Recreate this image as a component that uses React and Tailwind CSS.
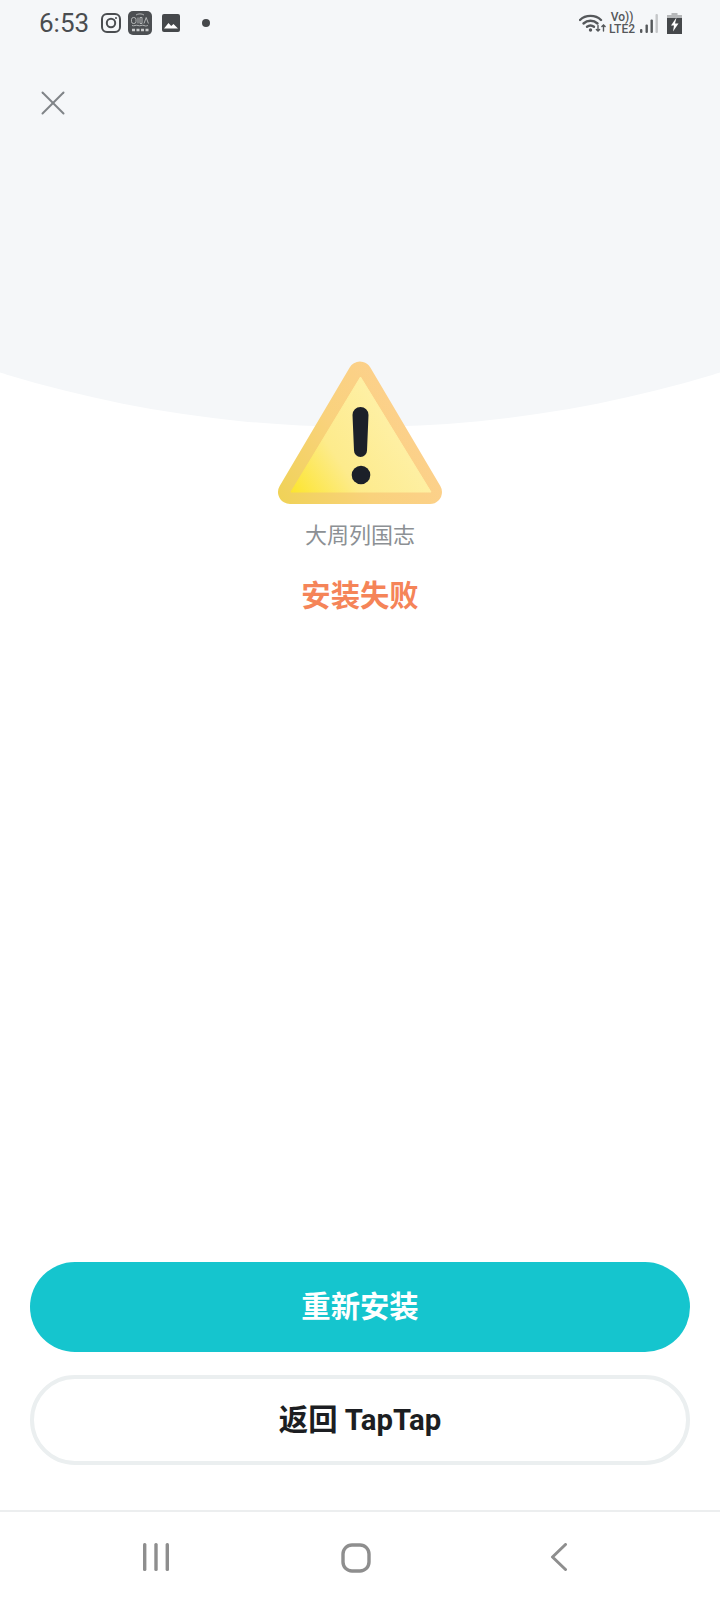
import React from "react";
import { X } from "lucide-react";

const cjk = "font-['Roboto','Noto_Sans_CJK_SC',sans-serif]";

const InstagramIcon = () => (
  <svg width="20" height="20" viewBox="0 0 20 20" fill="none" stroke="#4a4d50" strokeWidth="2">
    <rect x="1" y="1" width="18" height="18" rx="5" />
    <circle cx="10" cy="10" r="4.2" />
    <circle cx="15" cy="5" r="0.6" fill="#4a4d50" strokeWidth="1" />
  </svg>
);

// tiny app badge, mostly a noisy white scribble on dark
const AppBadge = () => (
  <svg width="24" height="24" viewBox="0 0 24 24">
    <rect width="24" height="24" rx="5" fill="#4c4f52" />
    <g stroke="#c9cbcc" strokeWidth="0.8" fill="none">
      <path d="M8 4c2-1.500 6-1.500 8 0" />
      <rect x="3.500" y="6.500" width="4.500" height="6" rx="2" />
      <path d="M10 6.500v6M12 6.500h2v6h-2z" />
      <path d="M16 12.500l2.200-6 2.200 6" />
      <path d="M4 14.500c2 1 4-1 6 0s4-1 6 0 3 0 4 0" />
      <path d="M4 19h3M8.500 19h3M13 19h3M17.500 19h3" strokeWidth="2.400" />
    </g>
  </svg>
);

const GalleryIcon = () => (
  <svg width="18" height="18" viewBox="0 0 18 18">
    <rect width="18" height="18" rx="2" fill="#45484b" />
    <path d="M2 14.500 6.500 9l2.700 3 2.300-2 4.500 4.500z" fill="#fff" />
  </svg>
);

const WifiIcon = () => (
  <svg width="27" height="18" viewBox="0 0 27 18" fill="none" stroke="#55585b" strokeWidth="2.400" strokeLinecap="round">
    <path d="M1 6C6.500 .5 16.500 .5 22 6" />
    <path d="M4.500 9.500c4-3.600 10-3.600 14 0" />
    <path d="M8 12.800c2.200-1.700 4.800-1.700 7 0" />
    <circle cx="11.500" cy="16" r="1.700" fill="#55585b" stroke="none" />
    <path d="M19 11.500v5.500M17.400 15.400l1.600 1.600 1.600-1.600M24.500 17v-6M22.900 12.600l1.600-1.600 1.600 1.600" strokeWidth="1.400" />
  </svg>
);

const SignalIcon = () => (
  <svg width="20" height="19" viewBox="0 0 20 19">
    <rect x="1" y="15" width="2.400" height="4" rx="1" fill="#55585b" />
    <rect x="6.500" y="10.500" width="2.400" height="8.500" rx="1" fill="#55585b" />
    <rect x="11.500" y="5.500" width="2.400" height="13.500" rx="1" fill="#55585b" />
    <rect x="16.500" y="0" width="2.400" height="19" rx="1" fill="#c4c6c8" />
  </svg>
);

const BatteryIcon = () => (
  <svg width="15" height="21" viewBox="0 0 15 21">
    <rect x="4.500" y="0" width="6" height="2" fill="#b6b8ba" />
    <rect x="0" y="2" width="15" height="3" fill="#b6b8ba" />
    <rect x="0" y="5" width="15" height="16" fill="#45484b" />
    <path d="M9.500 4.500 4 12.500h3l-1 6 5.500-8H8z" fill="#fff" />
  </svg>
);

const WarningIcon = () => (
  <svg width="166" height="144" viewBox="0 0 166 144">
    <defs>
      <linearGradient id="warnOuter" gradientUnits="userSpaceOnUse" x1="0" y1="144" x2="150" y2="60">
        <stop offset="0" stopColor="#efd255" />
        <stop offset="0.5" stopColor="#f9d27c" />
        <stop offset="1" stopColor="#fdd08f" />
      </linearGradient>
      <linearGradient id="warnInner" gradientUnits="userSpaceOnUse" x1="14" y1="131" x2="120" y2="60">
        <stop offset="0" stopColor="#fce52e" />
        <stop offset="0.45" stopColor="#fdeb8c" />
        <stop offset="1" stopColor="#fef0a6" />
      </linearGradient>
    </defs>
    <path
      d="M83 12.500 13 131h140z"
      fill="url(#warnOuter)"
      stroke="url(#warnOuter)"
      strokeWidth="24"
      strokeLinejoin="round"
    />
    <path d="M83.500 16 14 131h140z" fill="url(#warnInner)" stroke="url(#warnInner)" strokeWidth="1" strokeLinejoin="round" />
    <path d="M75.500 54a8 8 0 0 1 16 0L90 89.500a6.500 6.500 0 0 1-13 0z" fill="#1c2029" />
    <circle cx="84" cy="114" r="9.300" fill="#1c2029" />
  </svg>
);

const StatusBar = () => (
  <div className="flex h-[46px] items-center justify-between pl-[39px] pr-[38px]">
    <div className="flex items-center">
      <span className="font-['Roboto',sans-serif] text-[26px] leading-none text-[#4a4d50]">6:53</span>
      <div className="ml-3 flex items-center gap-[7px]">
        <InstagramIcon />
        <AppBadge />
        <span className="ml-[3px]"><GalleryIcon /></span>
      </div>
      <span className="ml-[22px] h-2 w-2 rounded-full bg-[#45484b]" />
    </div>
    <div className="flex items-center">
      <WifiIcon />
      <div className="ml-[3px] flex flex-col items-center font-['Roboto',sans-serif] text-[12px] font-medium leading-[12px] text-[#55585b]">
        <span>Vo))</span>
        <span>LTE2</span>
      </div>
      <span className="ml-1 mt-[1px]"><SignalIcon /></span>
      <span className="ml-2 mt-[1px]"><BatteryIcon /></span>
    </div>
  </div>
);

export default function App() {
  return (
    <div className={`relative flex h-[1600px] w-[720px] flex-col overflow-hidden bg-white ${cjk}`}>
      {/* grey dome behind the header */}
      <div className="absolute bottom-[1173px] left-[-856px] h-[2432px] w-[2432px] rounded-full bg-[#f5f7f9]" />

      <div className="relative flex flex-1 flex-col">
        <StatusBar />
        <div className="mt-[36px] pl-[32px]">
          <X size={42} strokeWidth={2} absoluteStrokeWidth className="text-[#7f8488]" />
        </div>

        <div className="mt-[237px] flex flex-col items-center">
          <WarningIcon />
          <p className="mt-[15px] text-[22px] leading-[32px] text-[#8c9094]">大周列国志</p>
          <p className="mt-[25px] text-[29.330px] font-bold leading-[38px] text-[#f58458]">安装失败</p>
        </div>

        <div className="mt-auto flex flex-col gap-[23px] px-[30px] pb-[45px]">
          <button className="flex h-[90px] items-center justify-center rounded-full bg-[#15c5ce] pt-[2px] text-[29.330px] font-bold text-white">
            重新安装
          </button>
          <button className="flex h-[90px] items-center justify-center rounded-full border-4 border-[#ebeff0] bg-white pt-[2px] text-[29.330px] font-bold text-[#1c1e22]">
            返回 TapTap
          </button>
        </div>

        <nav className="flex h-[90px] items-start justify-between border-t-2 border-[#eceeef] bg-white pl-[142px] pr-[152px] pt-[31px]">
          <svg width="28" height="28" viewBox="0 0 28 28" fill="#8e8e8e">
            <rect x="1" y="0" width="3.400" height="28" rx="1.500" />
            <rect x="12.300" y="0" width="3.400" height="28" rx="1.500" />
            <rect x="23.600" y="0" width="3.400" height="28" rx="1.500" />
          </svg>
          <svg width="30" height="30" viewBox="0 0 30 30" fill="none" stroke="#8e8e8e" strokeWidth="3.400">
            <rect x="2" y="2" width="26" height="26" rx="9" />
          </svg>
          <svg className="ml-2" width="18" height="28" viewBox="0 0 18 28" fill="none" stroke="#8e8e8e" strokeWidth="3" strokeLinecap="round" strokeLinejoin="round">
            <path d="M15.500 1.500 2.500 14l13 12.500" />
          </svg>
        </nav>
      </div>
    </div>
  );
}
